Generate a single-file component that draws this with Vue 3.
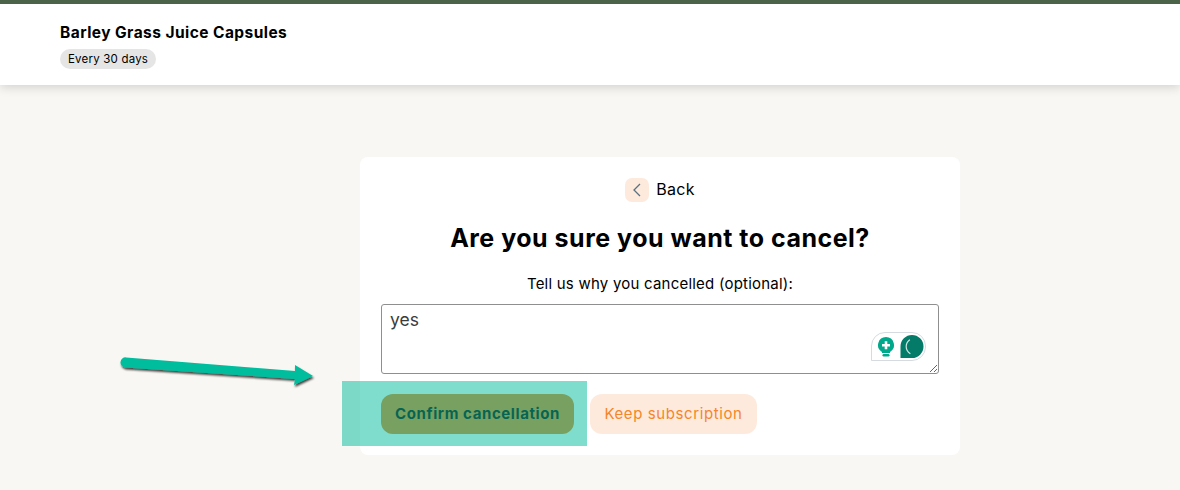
<script setup>
const productName = 'Barley Grass Juice Capsules'
</script>

<template>
  <div class="page">
    <header class="header">
      <h2 class="product">{{ productName }}</h2>
      <span class="pill">Every 30 days</span>
    </header>
    <main class="main">
      <section class="card">
        <button class="back">
          <span class="back-icon">
            <svg width="10" height="14" viewBox="0 0 10 14"><path d="M8 1 L2 7 L8 13" fill="none" stroke="#5b7180" stroke-width="1.3"/></svg>
          </span>
          <span class="back-text">Back</span>
        </button>
        <h1 class="title">Are you sure you want to cancel?</h1>
        <label class="label">Tell us why you cancelled (optional):</label>
        <div class="field">
          <textarea class="input">yes</textarea>
          <div class="widget">
            <svg width="18" height="21" viewBox="0 0 18 21">
              <path d="M9 1a8 8 0 0 0-4 14.900V17h8v-1.100A8 8 0 0 0 9 1z" fill="#00a88c"/>
              <rect x="5.5" y="18" width="7" height="2.4" rx="1.2" fill="#00a88c"/>
              <path d="M7.7 5.300h2.600V8H13v2.600h-2.700v2.700H7.700v-2.700H5V8h2.700z" fill="#fff"/>
            </svg>
            <svg width="25" height="25" viewBox="0 0 25 25">
              <path d="M13 1a11.500 11.500 0 1 1 0 23H1.500V12.500A11.500 11.500 0 0 1 13 1z" fill="#047b69"/>
              <path d="M10.500 6C6 9.500 6 16 11 19.500" fill="none" stroke="#cfe8e2" stroke-width="1.200" stroke-linecap="round"/>
            </svg>
          </div>
        </div>
        <div class="actions">
          <button class="btn confirm">Confirm cancellation</button>
          <button class="btn keep">Keep subscription</button>
        </div>
      </section>
    </main>
    <div class="highlight"></div>
    <svg class="arrow" width="210" height="40" viewBox="0 0 210 40">
      <defs>
        <filter id="sh" x="-10%" y="-50%" width="120%" height="200%">
          <feDropShadow dx="1" dy="2" stdDeviation="1.2" flood-color="#000" flood-opacity=".75"/>
        </filter>
      </defs>
      <path filter="url(#sh)" fill="#00bd9d" d="M10 5.400 L179 19 L179 13 L197 24 L178 33 L179 27 L9 15.400 A5 5 0 0 1 10 5.400 Z"/>
    </svg>
  </div>
</template>

<style>
html, body { margin: 0; background: #f9f7f3; }
</style>

<style scoped>
.page {
  position: relative;
  width: 1180px;
  height: 490px;
  overflow: hidden;
  background: #f9f7f3;
  font-family: "Inter", "Liberation Sans", sans-serif;
  color: #000;
}
.header {
  box-sizing: border-box;
  height: 85px;
  padding: 20px 60px 0;
  background: #fff;
  border-top: 4px solid #4a6349;
  box-shadow: 0 2px 10px rgba(0, 0, 0, .16);
}
.product {
  margin: 0;
  font-size: 15.5px;
  line-height: 18px;
  font-weight: 700;
  letter-spacing: .44px;
}
.pill {
  display: inline-block;
  margin-top: 7px;
  height: 20px;
  padding: 0 7.5px 0 8px;
  border-radius: 10px;
  background: #e5e5e5;
  font-size: 11.5px;
  line-height: 20px;
  letter-spacing: .2px;
}
.main {
  display: flex;
  padding: 72px 0 0 360px;
}
.card {
  box-sizing: border-box;
  width: 600px;
  height: 298px;
  padding: 21px 21px 0;
  background: #fff;
  border-radius: 8px;
  display: flex;
  flex-direction: column;
  align-items: center;
}
.back {
  display: flex;
  align-items: center;
  gap: 7px;
  border: 0;
  padding: 0;
  background: none;
  font: inherit;
  font-size: 16px;
  line-height: 22px;
  letter-spacing: .25px;
  color: #000;
}
.back-text {
  padding-bottom: 2px;
}
.back-icon {
  width: 24px;
  height: 24px;
  border-radius: 7px;
  background: #fdeadd;
  display: flex;
  align-items: center;
  justify-content: center;
}
.title {
  margin: 19px 0 0;
  font-size: 25px;
  line-height: 34px;
  font-weight: 700;
  letter-spacing: .5px;
}
.label {
  margin-top: 19px;
  font-size: 15px;
  line-height: 20px;
  letter-spacing: .22px;
}
.field {
  position: relative;
  align-self: stretch;
  margin-top: 10px;
  height: 70px;
}
.input {
  box-sizing: border-box;
  display: block;
  width: 100%;
  height: 70px;
  padding: 5px 8px;
  border: 1px solid #8f8f8f;
  border-radius: 3px;
  font-family: inherit;
  font-size: 17.5px;
  line-height: 20px;
  color: #3c3c3c;
  background: #fff;
}
.widget {
  position: absolute;
  right: 13px;
  top: 28px;
  box-sizing: border-box;
  width: 55px;
  height: 29px;
  padding: 0 1px 0 5px;
  display: flex;
  align-items: center;
  justify-content: space-between;
  background: #fff;
  border: 1px solid #d5dbe0;
  border-radius: 14px 14px 14px 0;
}
.actions {
  align-self: stretch;
  display: flex;
  gap: 16px;
  margin-top: 20px;
}
.btn {
  height: 40px;
  border: 0;
  border-radius: 12px;
  padding: 0 0 2px;
  font: inherit;
  font-size: 15px;
}
.confirm {
  width: 193px;
  background: #f08525;
  color: #0c0c0c;
  font-weight: 700;
  letter-spacing: .6px;
}
.keep {
  width: 167px;
  background: #fdeadd;
  color: #f5852a;
  font-weight: 400;
  letter-spacing: .6px;
}
.highlight {
  position: absolute;
  left: 342px;
  top: 381px;
  width: 245px;
  height: 65px;
  background: rgba(0, 187, 155, .5);
  pointer-events: none;
}
.arrow {
  position: absolute;
  left: 116px;
  top: 352px;
}
</style>
